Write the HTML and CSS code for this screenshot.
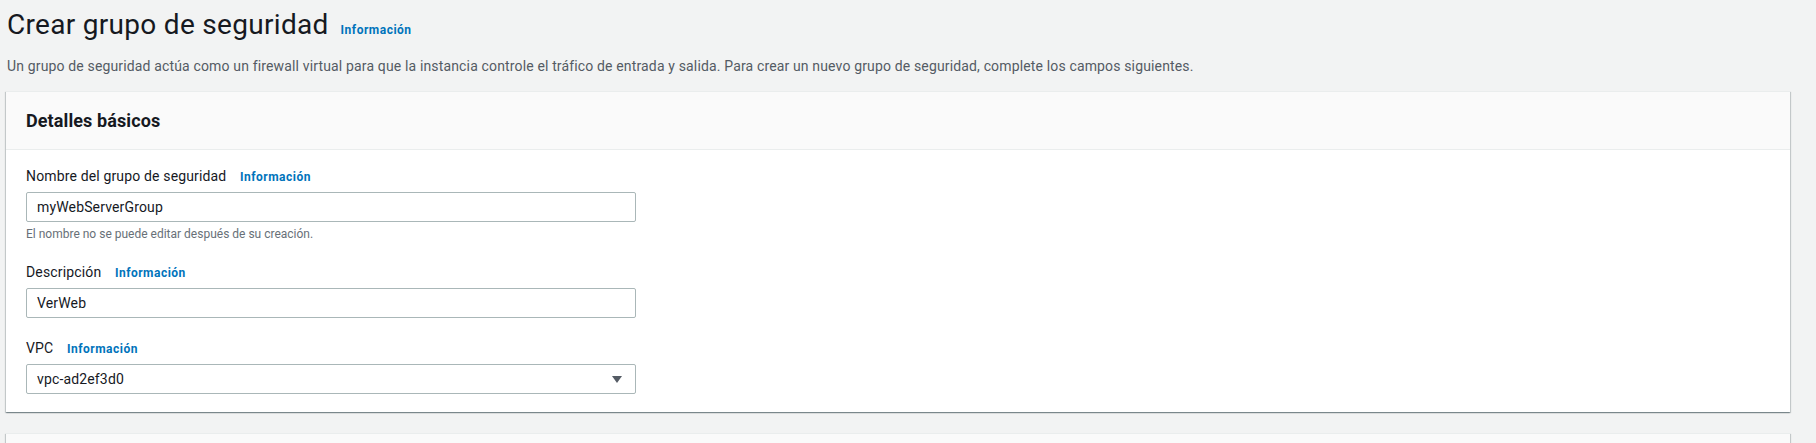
FILE: index.html
```html
<!DOCTYPE html>
<html lang="es">
<head>
<meta charset="utf-8">
<title>Crear grupo de seguridad</title>
<link rel="stylesheet" href="styles.css">
</head>
<body>
<main class="page">
  <header class="page-header">
    <h1 class="page-title">Crear grupo de seguridad <a class="info-link info-link--title" href="#">Información</a></h1>
    <p class="page-desc">Un grupo de seguridad actúa como un firewall virtual para que la instancia controle el tráfico de entrada y salida. Para crear un nuevo grupo de seguridad, complete los campos siguientes.</p>
  </header>

  <section class="card">
    <div class="card-header"><h2 class="card-title">Detalles básicos</h2></div>
    <div class="card-body">
      <div class="field">
        <label class="field-label">Nombre del grupo de seguridad <a class="info-link" href="#">Información</a></label>
        <div class="input">myWebServerGroup</div>
        <div class="field-hint">El nombre no se puede editar después de su creación.</div>
      </div>
      <div class="field">
        <label class="field-label">Descripción <a class="info-link" href="#">Información</a></label>
        <div class="input">VerWeb</div>
      </div>
      <div class="field">
        <label class="field-label">VPC <a class="info-link" href="#">Información</a></label>
        <div class="input select">
          <span>vpc-ad2ef3d0</span>
          <svg class="caret" width="10" height="7" viewBox="0 0 10 7"><path d="M0 0h10L5 7z" fill="#545b64"/></svg>
        </div>
      </div>
    </div>
  </section>

  <section class="card card--next">
    <div class="card-header card-header--stub"></div>
  </section>
</main>
</body>
</html>
```

FILE: styles.css
```css
html, body {
  margin: 0;
  padding: 0;
  background: #f2f3f3;
  font-family: Roboto, "Liberation Sans", Arial, sans-serif;
  color: #16191f;
  height: 443px;
  overflow: hidden;
}

.page {
  padding: 0 26px 0 6px;
}

.page-header {
  padding-left: 1px;
}

.page-title {
  margin: 7px 0 0;
  font-size: 28px;
  line-height: 36px;
  font-weight: 400;
  letter-spacing: 0.3px;
  color: #16191f;
  display: flex;
  align-items: baseline;
  gap: 12px;
}

.info-link {
  font-size: 12px;
  font-weight: 700;
  letter-spacing: 0.5px;
  color: #0073bb;
  text-decoration: none;
  margin-left: 10px;
}

.info-link--title {
  margin-left: 0;
}

.page-desc {
  margin: 8px 0 15px;
  font-size: 14px;
  line-height: 20px;
  letter-spacing: 0.15px;
  color: #545b64;
}

.card {
  background: #fff;
  border-top: 1px solid #eaeded;
  box-shadow: 0 1px 1px 0 rgba(0, 28, 36, 0.3), 1px 1px 1px 0 rgba(0, 28, 36, 0.15), -1px 1px 1px 0 rgba(0, 28, 36, 0.15);
}

.card--next {
  margin-top: 21px;
}

.card-header {
  background: #fafafa;
  border-bottom: 1px solid #eaeded;
  padding: 18px 20px 17px;
}

.card-header--stub {
  height: 40px;
  padding: 0;
}

.card-title {
  margin: 0;
  font-size: 18px;
  line-height: 22px;
  font-weight: 700;
  letter-spacing: 0.1px;
  color: #16191f;
}

.card-body {
  padding: 16px 20px 18px;
  display: flex;
  flex-direction: column;
  gap: 20px;
}

.field {
  display: flex;
  flex-direction: column;
}

.field-label {
  font-size: 14px;
  line-height: 20px;
  letter-spacing: 0.15px;
  color: #16191f;
  margin-bottom: 5px;
}

.input {
  box-sizing: border-box;
  width: 610px;
  height: 30px;
  border: 1px solid #aab7b8;
  border-radius: 2px;
  padding: 0 10px;
  font-size: 14px;
  line-height: 28px;
  letter-spacing: 0.15px;
  color: #16191f;
  background: #fff;
}

.select {
  display: flex;
  align-items: center;
  justify-content: space-between;
  padding-right: 13px;
}

.caret {
  display: block;
}

.field-hint {
  margin-top: 4px;
  font-size: 12px;
  line-height: 16px;
  color: #687078;
}
```
